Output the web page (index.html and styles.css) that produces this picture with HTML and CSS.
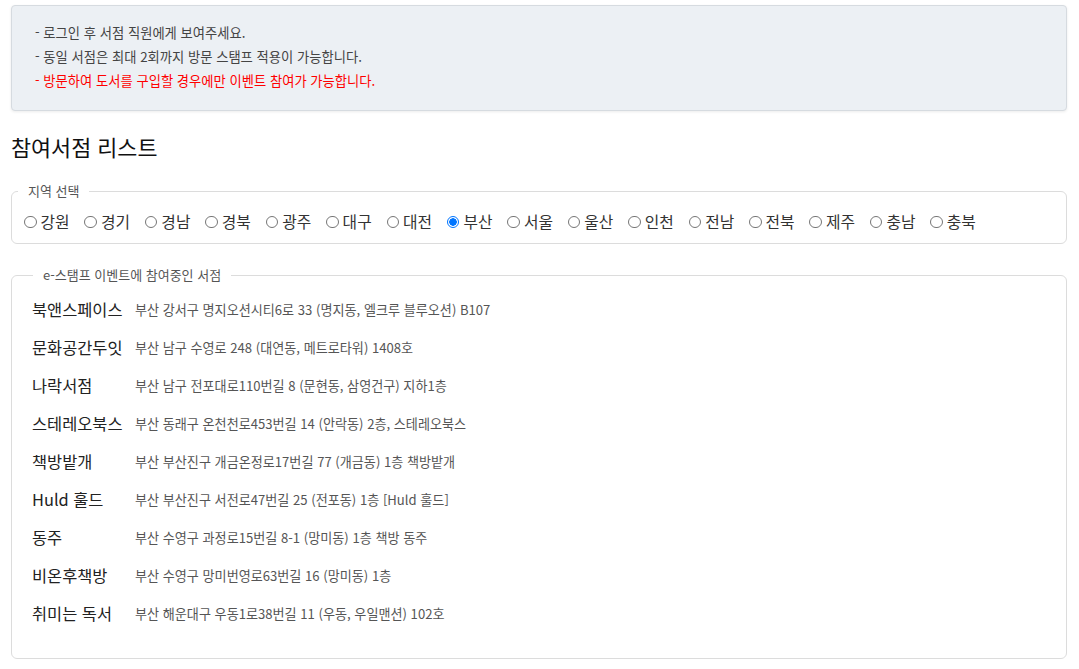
FILE: index.html
```html
<!DOCTYPE html>
<html lang="ko">
<head>
<meta charset="utf-8">
<title>참여서점 리스트</title>
<link rel="stylesheet" href="styles.css">
</head>
<body>
<div class="notice">
  <p>- 로그인 후 서점 직원에게 보여주세요.</p>
  <p>- 동일 서점은 최대 2회까지 방문 스탬프 적용이 가능합니다.</p>
  <p class="warn">- 방문하여 도서를 구입할 경우에만 이벤트 참여가 가능합니다.</p>
</div>

<h2 class="title">참여서점 리스트</h2>

<fieldset class="region">
  <legend>지역 선택</legend>
  <div class="radios">
    <label class="opt"><input type="radio" name="r">강원</label>
    <label class="opt"><input type="radio" name="r">경기</label>
    <label class="opt"><input type="radio" name="r">경남</label>
    <label class="opt"><input type="radio" name="r">경북</label>
    <label class="opt"><input type="radio" name="r">광주</label>
    <label class="opt"><input type="radio" name="r">대구</label>
    <label class="opt"><input type="radio" name="r">대전</label>
    <label class="opt"><input type="radio" name="r" checked>부산</label>
    <label class="opt"><input type="radio" name="r">서울</label>
    <label class="opt"><input type="radio" name="r">울산</label>
    <label class="opt"><input type="radio" name="r">인천</label>
    <label class="opt"><input type="radio" name="r">전남</label>
    <label class="opt"><input type="radio" name="r">전북</label>
    <label class="opt"><input type="radio" name="r">제주</label>
    <label class="opt"><input type="radio" name="r">충남</label>
    <label class="opt"><input type="radio" name="r">충북</label>
  </div>
</fieldset>

<fieldset class="stores">
  <legend>e-스탬프 이벤트에 참여중인 서점</legend>
  <ul class="list">
    <li><span class="name">북앤스페이스</span><span class="addr">부산 강서구 명지오션시티6로 33 (명지동, 엘크루 블루오션) B107</span></li>
    <li><span class="name">문화공간두잇</span><span class="addr">부산 남구 수영로 248 (대연동, 메트로타워) 1408호</span></li>
    <li><span class="name">나락서점</span><span class="addr">부산 남구 전포대로110번길 8 (문현동, 삼영건구) 지하1층</span></li>
    <li><span class="name">스테레오북스</span><span class="addr">부산 동래구 온천천로453번길 14 (안락동) 2층, 스테레오북스</span></li>
    <li><span class="name">책방밭개</span><span class="addr">부산 부산진구 개금온정로17번길 77 (개금동) 1층 책방밭개</span></li>
    <li><span class="name">Huld 훌드</span><span class="addr">부산 부산진구 서전로47번길 25 (전포동) 1층 [Huld 훌드]</span></li>
    <li><span class="name">동주</span><span class="addr">부산 수영구 과정로15번길 8-1 (망미동) 1층 책방 동주</span></li>
    <li><span class="name">비온후책방</span><span class="addr">부산 수영구 망미번영로63번길 16 (망미동) 1층</span></li>
    <li><span class="name">취미는 독서</span><span class="addr">부산 해운대구 우동1로38번길 11 (우동, 우일맨션) 102호</span></li>
  </ul>
</fieldset>
</body>
</html>
```
FILE: styles.css
```css
* { box-sizing: border-box; }

body {
  margin: 0;
  padding: 5px 12px 0 11px;
  font-family: "Noto Sans CJK KR", "Noto Sans", sans-serif;
  color: #222;
  background: #fff;
}

.notice {
  background: #ecf0f4;
  border: 1px solid #d6dbe0;
  border-radius: 4px;
  box-shadow: 0 1px 3px rgba(0,0,0,0.08);
  padding: 15px 23px 16px;
  height: 106px;
}

.notice p {
  margin: 0;
  font-size: 13.3px;
  line-height: 24px;
  color: #444;
}

.notice .warn { color: #ff0000; }

.title {
  margin: 21px 0 0;
  font-size: 21.8px;
  font-weight: 400;
  line-height: 30px;
  color: #111;
}

fieldset {
  margin: 0;
  border: 1px solid #dcdcdc;
  border-radius: 6px;
  min-width: 0;
}

legend {
  font-size: 13px;
  line-height: 18px;
  color: #555;
  padding: 0 10px;
}

.region {
  margin-top: 20px;
  padding: 11px 12px 10px;
}

.region legend { margin-left: -6px; }

.radios {
  display: flex;
  flex-wrap: wrap;
  align-items: center;
}

.opt {
  display: inline-flex;
  align-items: center;
  font-size: 15.8px;
  line-height: 22px;
  color: #333;
  margin-right: 14.85px;
}

.opt input {
  appearance: none;
  -webkit-appearance: none;
  width: 12.5px;
  height: 12.5px;
  margin: 0 4px 0 0;
  border: 1px solid #767676;
  border-radius: 50%;
  background: #fff;
}

.opt input:checked {
  border: 1px solid #0075ff;
  background: radial-gradient(circle, #0075ff 0 3.5px, #fff 4px);
}

.stores {
  margin-top: 22px;
  padding: 6px 20px 25px;
  height: 393px;
}

.stores legend { margin-left: 1px; }

.list {
  list-style: none;
  margin: 0;
  padding: 0;
}

.list li {
  display: flex;
  align-items: center;
  height: 38px;
}

.name {
  width: 103px;
  flex: none;
  font-size: 16.4px;
  color: #222;
}

.addr {
  font-size: 13.1px;
  color: #555;
}
```
